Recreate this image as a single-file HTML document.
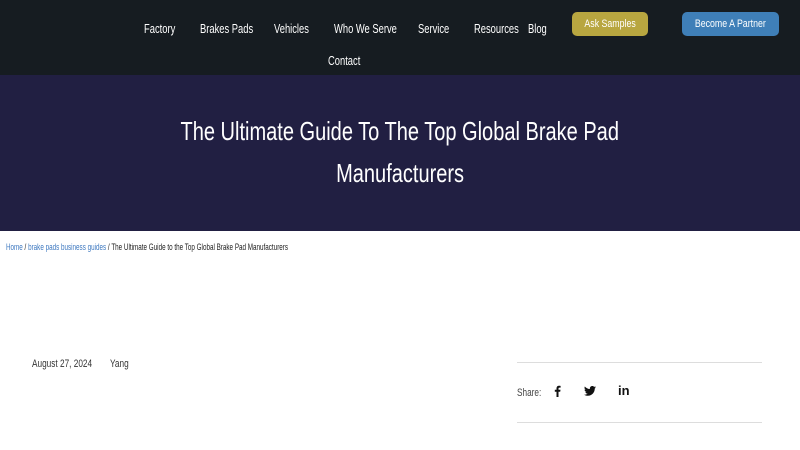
<!DOCTYPE html>
<html><head><style>
*{margin:0;padding:0;box-sizing:border-box}
body{width:800px;height:450px;overflow:hidden;background:#fff;font-family:"Liberation Sans",sans-serif;position:relative}
.a{position:absolute;white-space:nowrap;transform:scaleX(.75);transform-origin:left center}
.hdr{position:absolute;left:0;top:0;width:800px;height:75px;background:#161c21}
.hero{position:absolute;left:0;top:75px;width:800px;height:156px;background:#211f42}
.nav{color:#fff;font-size:12.5px;top:22px}
.btn{position:absolute;border-radius:5px;color:#fff;font-size:11px;text-align:center;line-height:24px}
.t{position:absolute;left:0;width:800px;text-align:center;color:#fff;font-size:26px;white-space:nowrap}
.t span{display:inline-block;transform:scaleX(.77)}
.line{position:absolute;left:517px;width:245px;height:1px;background:#ddd}
</style></head><body>
<div class="hdr"></div>
<div class="a nav" style="left:144px">Factory</div>
<div class="a nav" style="left:200px">Brakes Pads</div>
<div class="a nav" style="left:274px">Vehicles</div>
<div class="a nav" style="left:334px">Who We Serve</div>
<div class="a nav" style="left:418px">Service</div>
<div class="a nav" style="left:474px">Resources</div>
<div class="a nav" style="left:528px">Blog</div>
<div class="a nav" style="left:328px;top:54px">Contact</div>
<div class="btn" style="left:572px;top:12px;width:76px;background:#b8a640"><span style="display:inline-block;transform:scaleX(.8)">Ask Samples</span></div>
<div class="btn" style="left:682px;top:12px;width:97px;background:#3f7fb8"><span style="display:inline-block;transform:scaleX(.8)">Become A Partner</span></div>
<div class="hero"></div>
<div class="t" style="top:116px"><span>The Ultimate Guide To The Top Global Brake Pad</span></div>
<div class="t" style="top:158px"><span>Manufacturers</span></div>
<div class="a" style="left:6px;top:242px;font-size:9px;color:#222;transform:scaleX(.7)"><span style="color:#3d78c0">Home</span> / <span style="color:#3d78c0">brake pads business guides</span> / The Ultimate Guide to the Top Global Brake Pad Manufacturers</div>
<div class="a" style="left:32px;top:358px;font-size:11px;color:#333">August 27, 2024</div>
<div class="a" style="left:110px;top:358px;font-size:11px;color:#333">Yang</div>
<div class="line" style="top:362px"></div>
<div class="line" style="top:422px"></div>
<div class="a" style="left:517px;top:387px;font-size:11px;color:#444">Share:</div>
<svg style="position:absolute;left:552px;top:385px" width="10" height="12" viewBox="0 0 10 12"><path d="M6.5 12V6.8H8.2L8.5 4.8H6.5V3.6c0-.6.2-1 1-1H8.6V.9C8.3.9 7.7.8 7 .8 5.5.8 4.5 1.7 4.5 3.4V4.8H2.8V6.8H4.5V12Z" fill="#111"/></svg>
<svg style="position:absolute;left:584px;top:386px" width="12" height="10" viewBox="0 0 24 20"><path d="M24 2.4c-.9.4-1.8.6-2.8.8 1-.6 1.8-1.6 2.2-2.7-1 .6-2 1-3.1 1.2C19.3.7 18 0 16.6 0c-2.700 0-4.9 2.2-4.9 4.9 0 .4 0 .8.1 1.1C7.7 5.8 4.1 3.9 1.7.9c-.4.7-.7 1.6-.7 2.5 0 1.7.9 3.200 2.2 4.1-.8 0-1.6-.2-2.2-.6v.1c0 2.4 1.7 4.4 3.9 4.8-.4.1-.8.2-1.3.2-.3 0-.6 0-.9-.1.6 2 2.4 3.4 4.6 3.4-1.7 1.3-3.8 2.1-6.1 2.1-.4 0-.8 0-1.2-.1C2.2 18.8 4.8 19.6 7.5 19.600c9.1 0 14-7.5 14-14v-.6c1-.7 1.8-1.6 2.5-2.6z" fill="#111"/></svg>
<div style="position:absolute;left:618px;top:383px;font-size:13px;font-weight:bold;color:#111">in</div>
</body></html>
